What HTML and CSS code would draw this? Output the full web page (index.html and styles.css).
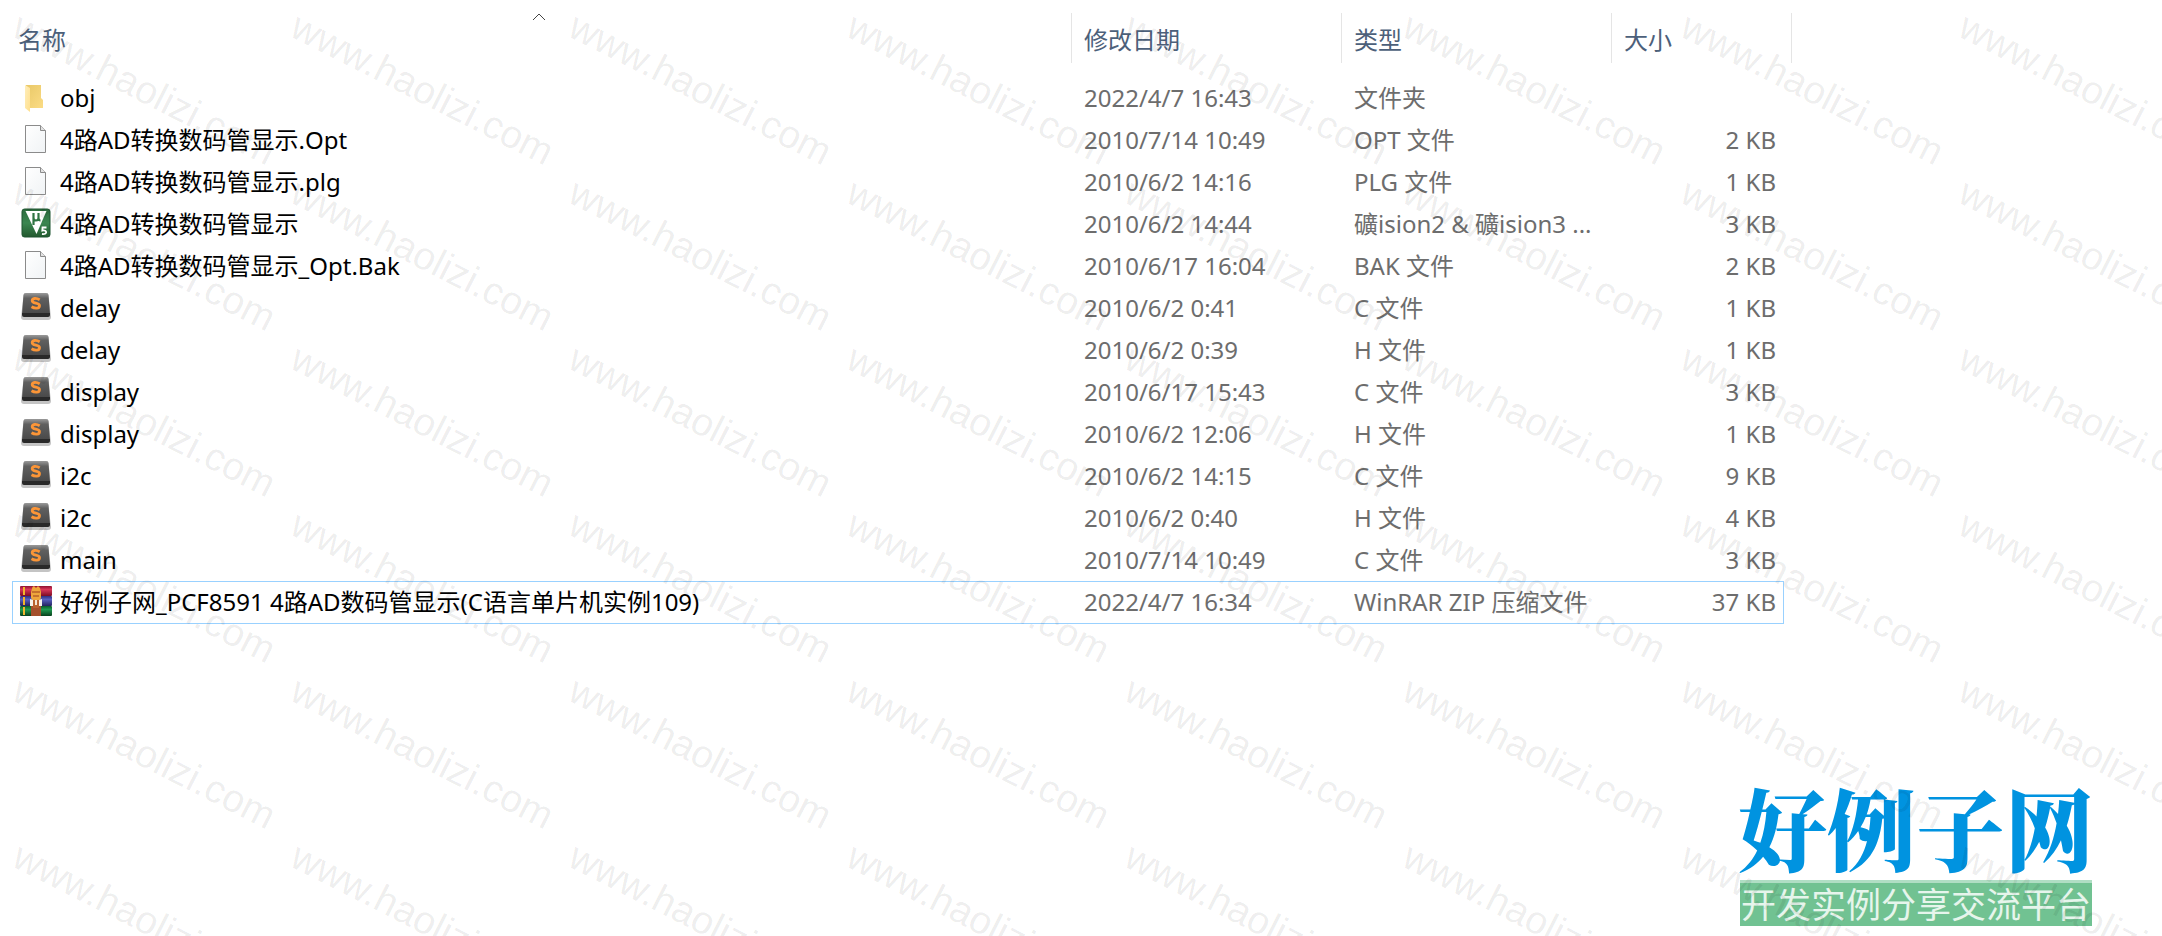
FILE: index.html
```html
<!DOCTYPE html>
<html lang="zh-CN">
<head>
<meta charset="utf-8">
<title>文件列表</title>
<link rel="stylesheet" href="styles.css">
</head>
<body>
<svg class="sprite" aria-hidden="true">
  <defs>
    <linearGradient id="folder-front" x1="0" y1="0" x2="1" y2="1"><stop offset="0" stop-color="#ffeebb"/><stop offset="1" stop-color="#ffdf8c"/></linearGradient>
    <linearGradient id="folder-back" x1="0" y1="0" x2="1" y2="1"><stop offset="0" stop-color="#e9c867"/><stop offset="1" stop-color="#fbdc85"/></linearGradient>
    <linearGradient id="page-fill" x1="0" y1="0" x2="1" y2="1"><stop offset="0" stop-color="#ffffff"/><stop offset="1" stop-color="#f0f3f5"/></linearGradient>
    <linearGradient id="mu-fill" x1="0" y1="0" x2="0" y2="1"><stop offset="0" stop-color="#2c6b3d"/><stop offset=".5" stop-color="#3b8650"/><stop offset="1" stop-color="#23592f"/></linearGradient>
    <linearGradient id="sub-top" x1="0" y1="0" x2="0" y2="1"><stop offset="0" stop-color="#9a9a9a"/><stop offset=".25" stop-color="#606060"/><stop offset="1" stop-color="#484848"/></linearGradient>
    <linearGradient id="book-red" x1="0" y1="0" x2="0" y2="1"><stop offset="0" stop-color="#8e1232"/><stop offset=".35" stop-color="#d8375a"/><stop offset="1" stop-color="#7c0c24"/></linearGradient>
    <linearGradient id="book-blue" x1="0" y1="0" x2="0" y2="1"><stop offset="0" stop-color="#2f2f80"/><stop offset=".35" stop-color="#5860c0"/><stop offset="1" stop-color="#23235e"/></linearGradient>
    <linearGradient id="book-green" x1="0" y1="0" x2="0" y2="1"><stop offset="0" stop-color="#0c5a2a"/><stop offset=".35" stop-color="#1f9a50"/><stop offset="1" stop-color="#08401c"/></linearGradient>
  </defs>
  <symbol id="folder" viewBox="0 0 32 32">
    <path d="M6 3H21V16L23 18V26H6Z" fill="url(#folder-back)"/>
    <path d="M5 3L10 6V30L5 26Z" fill="url(#folder-front)"/>
  </symbol>
  <symbol id="page" viewBox="0 0 32 32">
    <path d="M5.500 1.500H20.500L25.500 6.500V28.500H5.500Z" fill="url(#page-fill)" stroke="#8b8b8b"/>
    <path d="M20.500 1.500V6.500H25.500" fill="#e2e2e2" stroke="#8b8b8b"/>
  </symbol>
  <symbol id="uvision" viewBox="0 0 32 32">
    <rect x="2" y="1" width="28" height="28" rx="2.500" fill="url(#mu-fill)" stroke="#1f5530"/>
    <path d="M5.500 3H26.500L16.500 26Z" fill="#fff"/>
    <path d="M13.500 17V5M13.500 6V10C13.500 13.300 18.500 13.300 18.500 10V5M18.500 10Q18.500 12.500 20.500 12.500" fill="none" stroke="#2f7443" stroke-width="2.200"/>
    <path d="M26.500 19.500H22.500L22.300 22.600C27.500 21.500 27.500 27 22 26" fill="none" stroke="#fff" stroke-width="1.800"/>
  </symbol>
  <symbol id="sublime" viewBox="0 0 32 32">
    <path d="M3.500 3Q3.500 1 6 1H26Q28.500 1 28.500 3L31 25Q31 28 28 28H4Q1 28 1 25Z" fill="#c4c4c4"/>
    <path d="M3.500 3Q3.500 1 6 1H26Q28.500 1 28.500 3L30 22H2Z" fill="url(#sub-top)"/>
    <path d="M2 21H30V23Q30 25 28 25H4Q2 25 2 23Z" fill="#292929"/>
    <path d="M19.700 7.800C16 5.600 12.200 6.200 12.200 8.700C12.200 12 19.500 10.400 19.500 13.700C19.500 16.600 15 16.800 11.500 14.800" fill="none" stroke="#fb9537" stroke-width="2.800"/>
  </symbol>
  <symbol id="rar" viewBox="0 0 32 32">
    <rect x="0" y="0" width="32" height="10" rx="1" fill="url(#book-red)"/>
    <rect x="0" y="10" width="32" height="10" rx="1" fill="url(#book-blue)"/>
    <rect x="0" y="20" width="32" height="10" rx="1" fill="url(#book-green)"/>
    <path d="M4 1V9M4 11V19M4 21V29" stroke="#f0b52c" stroke-width="2"/>
    <path d="M11 20H21V30H11Z" fill="#a4502c"/>
    <path d="M12.500 1L14 0L16 2L18 0L20 2L21 6V12L19 15H13L11 12V6Z" fill="#eea63c"/>
    <path d="M12 6H20M13 10H19" stroke="#b8622a" stroke-width="1.500"/>
    <path d="M10 13L13 14V20H10ZM22 13L19 14V20H22Z" fill="#f6f2ea"/>
    <path d="M13 14H19V22H13Z" fill="#b9622f"/>
    <path d="M15 14H17V19H15Z" fill="#f4e6d4"/>
  </symbol>
</svg>

<main class="explorer">
  <table class="files">
    <colgroup><col><col class="col-date"><col class="col-type"><col class="col-size"></colgroup>
    <thead>
      <tr>
        <th scope="col" aria-sort="ascending"><button type="button">名称</button><svg class="caret" viewBox="0 0 14 8" aria-hidden="true"><path d="M1 7L7 1L13 7"/></svg></th>
        <th scope="col"><button type="button">修改日期</button></th>
        <th scope="col"><button type="button">类型</button></th>
        <th scope="col"><button type="button">大小</button></th>
      </tr>
    </thead>
    <tbody>
      <tr><td><div class="name"><svg class="icon"><use href="#folder"/></svg>obj</div></td><td>2022/4/7 16:43</td><td>文件夹</td><td></td></tr>
      <tr><td><div class="name"><svg class="icon"><use href="#page"/></svg>4路AD转换数码管显示.Opt</div></td><td>2010/7/14 10:49</td><td>OPT 文件</td><td>2 KB</td></tr>
      <tr><td><div class="name"><svg class="icon"><use href="#page"/></svg>4路AD转换数码管显示.plg</div></td><td>2010/6/2 14:16</td><td>PLG 文件</td><td>1 KB</td></tr>
      <tr><td><div class="name"><svg class="icon"><use href="#uvision"/></svg>4路AD转换数码管显示</div></td><td>2010/6/2 14:44</td><td>礦ision2 &amp; 礦ision3 ...</td><td>3 KB</td></tr>
      <tr><td><div class="name"><svg class="icon"><use href="#page"/></svg>4路AD转换数码管显示_Opt.Bak</div></td><td>2010/6/17 16:04</td><td>BAK 文件</td><td>2 KB</td></tr>
      <tr><td><div class="name"><svg class="icon"><use href="#sublime"/></svg>delay</div></td><td>2010/6/2 0:41</td><td>C 文件</td><td>1 KB</td></tr>
      <tr><td><div class="name"><svg class="icon"><use href="#sublime"/></svg>delay</div></td><td>2010/6/2 0:39</td><td>H 文件</td><td>1 KB</td></tr>
      <tr><td><div class="name"><svg class="icon"><use href="#sublime"/></svg>display</div></td><td>2010/6/17 15:43</td><td>C 文件</td><td>3 KB</td></tr>
      <tr><td><div class="name"><svg class="icon"><use href="#sublime"/></svg>display</div></td><td>2010/6/2 12:06</td><td>H 文件</td><td>1 KB</td></tr>
      <tr><td><div class="name"><svg class="icon"><use href="#sublime"/></svg>i2c</div></td><td>2010/6/2 14:15</td><td>C 文件</td><td>9 KB</td></tr>
      <tr><td><div class="name"><svg class="icon"><use href="#sublime"/></svg>i2c</div></td><td>2010/6/2 0:40</td><td>H 文件</td><td>4 KB</td></tr>
      <tr><td><div class="name"><svg class="icon"><use href="#sublime"/></svg>main</div></td><td>2010/7/14 10:49</td><td>C 文件</td><td>3 KB</td></tr>
      <tr class="focused"><td><div class="name"><svg class="icon"><use href="#rar"/></svg>好例子网_PCF8591 4路AD数码管显示(C语言单片机实例109)</div></td><td>2022/4/7 16:34</td><td>WinRAR ZIP 压缩文件</td><td>37 KB</td></tr>
    </tbody>
  </table>
</main>

<aside class="brand">
  <div class="brand-name">好例子网</div>
  <div class="brand-slogan">开发实例分享交流平台</div>
</aside>

<div class="watermark" aria-hidden="true"></div>
<script src="watermark.js"></script>
</body>
</html>
```
FILE: styles.css
```css
* {
  box-sizing: border-box;
}

body {
  margin: 0;
  min-height: 100vh;
  position: relative;
  overflow: hidden;
  background: #fff;
  color: #000;
  font: 24px/32px "Noto Sans", "Noto Sans CJK SC", sans-serif;
}

.sprite {
  position: absolute;
  width: 0;
  height: 0;
}

.explorer {
  padding: 13px 370px 0 12px;
}

.files {
  width: 100%;
  table-layout: fixed;
  border-collapse: separate;
  border-spacing: 0;
}

.col-date,
.col-type {
  width: 270px;
}

.col-size {
  width: 180px;
}

.files th {
  position: relative;
  height: 50px;
  padding: 3px 12px 0;
  border-right: 1px solid #e5e5e5;
  text-align: left;
  font-weight: 400;
}

.files th:first-child {
  padding-left: 6px;
}

.files th button {
  padding: 0;
  border: 0;
  background: none;
  color: #4c607a;
  font: inherit;
}

.caret {
  position: absolute;
  top: 0;
  left: 50%;
  width: 14px;
  height: 8px;
  margin-left: -10px;
  fill: none;
  stroke: #444;
}

.files tbody::before {
  content: "";
  display: block;
  height: 14px;
}

.files td {
  height: 42px;
  padding: 0 12px;
  color: #6d6d6d;
  white-space: nowrap;
}

.files td:first-child {
  padding-left: 8px;
  color: #000;
}

.files td:last-child {
  padding-right: 16px;
  text-align: right;
}

.name {
  display: flex;
  align-items: center;
  gap: 8px;
}

.icon {
  flex: none;
  width: 32px;
  height: 32px;
}

.focused {
  position: relative;
}

.focused td:first-child::after {
  content: "";
  position: absolute;
  inset: 0 8px -1px 0;
  border: 1px solid #99d1ff;
}

.brand {
  position: absolute;
  right: 70px;
  bottom: 10px;
  width: 352px;
  font-family: "Noto Sans CJK SC", sans-serif;
}

.brand-name {
  display: flex;
  justify-content: center;
  padding-bottom: 6px;
  color: #0093e0;
  font-family: "Noto Serif CJK SC", "Noto Sans CJK SC", serif;
  font-size: 89px;
  font-weight: 900;
  line-height: 96px;
  white-space: nowrap;
}

.brand-slogan {
  padding-bottom: 4px;
  border-top: 3px solid #b0dec4;
  background: #71c292;
  color: #e6f5ec;
  font-size: 35px;
  line-height: 39px;
  text-align: center;
  white-space: nowrap;
}

.watermark {
  position: absolute;
  inset: 0;
  display: grid;
  grid-template-columns: repeat(var(--columns), 278px);
  grid-auto-rows: 166px;
  overflow: hidden;
  pointer-events: none;
  color: rgba(0, 0, 0, 0.08);
  font: 39px/44px "Liberation Sans", Arial, sans-serif;
}

.watermark span {
  padding: 4px 0 0 26px;
  white-space: nowrap;
  transform: rotate(27deg);
  transform-origin: 26px 4px;
}
```
FILE: watermark.js
```js
const layer = document.querySelector(".watermark");
const columns = Math.ceil(layer.clientWidth / 278);
const rows = Math.ceil(layer.clientHeight / 166);

layer.style.setProperty("--columns", columns);

for (let i = 0; i < columns * rows; i++) {
  const mark = document.createElement("span");
  mark.textContent = "www.haolizi.com";
  layer.append(mark);
}
```
